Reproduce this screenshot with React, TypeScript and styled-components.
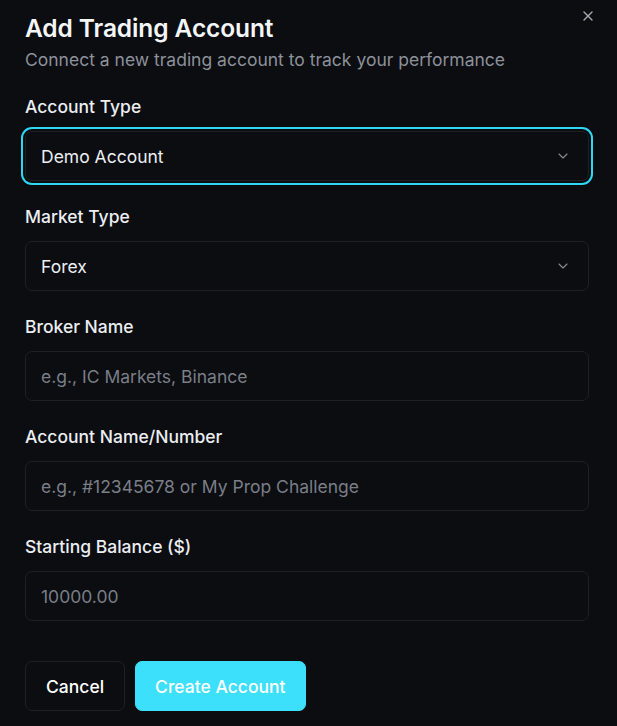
import React from "react";
import styled, { createGlobalStyle } from "styled-components";

const GlobalStyle = createGlobalStyle`
  html, body {
    margin: 0;
    padding: 0;
    background: #0b0d11;
  }
  * { box-sizing: border-box; }
`;

const Page = styled.div`
  position: relative;
  min-height: 726px;
  background: #0b0d11;
  padding: 14px 28px 0 25px;
  font-family: Inter, "Noto Sans", sans-serif;
  color: #e6e8eb;
`;

const Header = styled.header`
  display: flex;
  flex-direction: column;
  gap: 6px;
`;

const Title = styled.h2`
  margin: 0;
  font-size: 24.5px;
  line-height: 28px;
  font-weight: 600;
  letter-spacing: -0.1px;
  color: #f4f5f7;
`;

const Subtitle = styled.p`
  margin: 0;
  font-size: 17.5px;
  line-height: 24px;
  color: #8d9199;
`;

const CloseButton = styled.button`
  position: absolute;
  top: 7px;
  right: 20px;
  width: 18px;
  height: 18px;
  padding: 0;
  border: none;
  background: transparent;
  color: #a3a6ad;
  display: flex;
  align-items: center;
  justify-content: center;
  cursor: pointer;
`;

const Form = styled.form`
  display: flex;
  flex-direction: column;
  gap: 24px;
  margin-top: 23px;
`;

const Field = styled.div`
  display: flex;
  flex-direction: column;
  gap: 12px;
`;

const Label = styled.label`
  font-size: 17.5px;
  line-height: 24px;
  font-weight: 500;
  color: #eceef1;
`;

const Box = styled.div<{ $focused?: boolean }>`
  height: 50px;
  border: 1px solid #1d2027;
  border-radius: 7px;
  background: #0b0d11;
  display: flex;
  align-items: center;
  justify-content: space-between;
  padding: 0 17px 0 15px;
  font-size: 17.5px;
  box-shadow: ${(p) =>
    p.$focused ? "0 0 0 2px #0b0d11, 0 0 0 4px #2fd8f2" : "none"};
`;

const Value = styled.span`
  color: #eceef1;
`;

const Placeholder = styled.span`
  color: #7a7e86;
`;

const Chevron = styled.svg`
  width: 16px;
  height: 16px;
  color: #8a8d94;
`;

const Footer = styled.div`
  display: flex;
  gap: 10px;
  margin-top: 40px;
`;

const Button = styled.button<{ $primary?: boolean }>`
  height: 50px;
  padding: 0 ${(p) => (p.$primary ? "19px" : "20px")};
  border-radius: 7px;
  font-family: Inter, "Noto Sans", sans-serif;
  font-size: 17.5px;
  font-weight: 500;
  cursor: pointer;
  color: #ffffff;
  border: 1px solid ${(p) => (p.$primary ? "#3ce0fa" : "#1d2027")};
  background: ${(p) => (p.$primary ? "#3ce0fa" : "#0b0d11")};
`;

const ChevronDown = () => (
  <Chevron viewBox="0 0 24 24" fill="none" stroke="currentColor" strokeWidth={1.6} strokeLinecap="round" strokeLinejoin="round">
    <path d="m6 9 6 6 6-6" />
  </Chevron>
);

type FieldDef = {
  label: string;
  kind: "select" | "input";
  value?: string;
  placeholder?: string;
  focused?: boolean;
};

const fields: FieldDef[] = [
  { label: "Account Type", kind: "select", value: "Demo Account", focused: true },
  { label: "Market Type", kind: "select", value: "Forex" },
  { label: "Broker Name", kind: "input", placeholder: "e.g., IC Markets, Binance" },
  { label: "Account Name/Number", kind: "input", placeholder: "e.g., #12345678 or My Prop Challenge" },
  { label: "Starting Balance ($)", kind: "input", placeholder: "10000.00" },
];

export default function App() {
  return (
    <>
      <GlobalStyle />
      <Page>
        <CloseButton aria-label="Close">
          <svg width="16" height="16" viewBox="0 0 24 24" fill="none" stroke="currentColor" strokeWidth={2} strokeLinecap="round" strokeLinejoin="round">
            <path d="M18 6 6 18" />
            <path d="m6 6 12 12" />
          </svg>
        </CloseButton>
        <Header>
          <Title>Add Trading Account</Title>
          <Subtitle>Connect a new trading account to track your performance</Subtitle>
        </Header>
        <Form onSubmit={(e) => e.preventDefault()}>
          {fields.map((f) => (
            <Field key={f.label}>
              <Label>{f.label}</Label>
              <Box $focused={f.focused}>
                {f.value ? <Value>{f.value}</Value> : <Placeholder>{f.placeholder}</Placeholder>}
                {f.kind === "select" && <ChevronDown />}
              </Box>
            </Field>
          ))}
        </Form>
        <Footer>
          <Button type="button">Cancel</Button>
          <Button type="button" $primary>Create Account</Button>
        </Footer>
      </Page>
    </>
  );
}
